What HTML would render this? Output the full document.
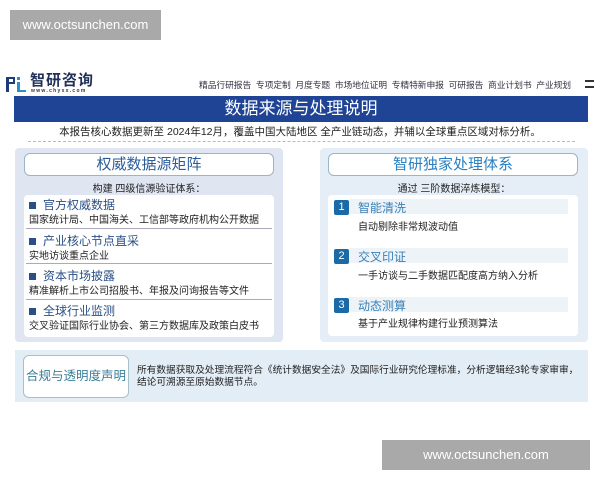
<!DOCTYPE html>
<html><head><meta charset="utf-8"><style>
*{margin:0;padding:0;box-sizing:border-box}
body{width:600px;height:480px;background:#fff;position:relative;overflow:hidden;font-family:"Liberation Sans","Noto Sans CJK SC",sans-serif;color:#222}
.a{position:absolute}
.badge{background:#a9a9a9;color:#fff;font-size:13px;line-height:30px;text-align:center}
.nav{font-size:8.8px;color:#334;white-space:nowrap;letter-spacing:-0.1px}
.panel{border-radius:4px}
.hdr{background:#fff;border:1px solid #9fb3c8;border-radius:6px;text-align:center;font-size:15px;line-height:22px}
.sub{font-size:10px;text-align:center;width:100%}
.h{font-size:12px;color:#2b4f85;white-space:nowrap}
.d{font-size:10px;color:#222;white-space:nowrap}
.ln{height:1px;background:#aab}
.num{background:#1b6aa5;color:#fff;font-size:11px;text-align:center;line-height:15px;width:15px;height:15px;border-radius:2px}
.band{background:#eef3f8;height:15px}
.h2{font-size:12px;color:#3a80b5;white-space:nowrap}
</style></head><body>
<div class="a badge" style="left:10px;top:10px;width:151px;height:30px">www.octsunchen.com</div>
<div class="a badge" style="left:382px;top:440px;width:208px;height:30px">www.octsunchen.com</div>

<svg class="a" style="left:5px;top:76px" width="22" height="17" viewBox="0 0 22 17">
<path d="M1 1h9v7H4v8H1z" fill="#1f3a78"/><path d="M12 1h3v3h-3z" fill="#2a8fd0"/><path d="M12 6h3v8h6v2h-9z" fill="#2a8fd0"/><path d="M4 3h4v3H4z" fill="#fff"/></svg>
<div class="a" style="left:30px;top:73px;font-size:15px;line-height:15px;font-weight:bold;color:#1f2f55;letter-spacing:1px">智研咨询</div>
<div class="a" style="left:31px;top:89px;font-size:5px;line-height:5px;color:#333;letter-spacing:1.3px;font-weight:bold">www.chyxx.com</div>
<div class="a nav" style="left:199px;top:78px">精品行研报告 &nbsp;专项定制 &nbsp;月度专题 &nbsp;市场地位证明 &nbsp;专精特新申报 &nbsp;可研报告 &nbsp;商业计划书 &nbsp;产业规划</div>
<div class="a" style="left:585px;top:80px;width:9px;height:8px;border-top:2px solid #333;border-bottom:2px solid #333"></div>

<div class="a" style="left:14px;top:96px;width:574px;height:26px;background:#1f4496;color:#fff;font-size:17px;text-align:center;line-height:26px">数据来源与处理说明</div>
<div class="a" style="left:0;top:124px;width:600px;text-align:center;font-size:10.5px">本报告核心数据更新至 2024年12月，覆盖中国大陆地区 全产业链动态，并辅以全球重点区域对标分析。</div>
<div class="a" style="left:28px;top:141px;width:547px;border-top:1px dashed #bbb"></div>

<div class="a panel" style="left:15px;top:148px;width:268px;height:194px;background:#dfe5f1"></div>
<div class="a hdr" style="left:24px;top:153px;width:250px;height:23px;color:#2b5c9a">权威数据源矩阵</div>
<div class="a sub" style="left:15px;top:180px;width:268px">构建 四级信源验证体系：</div>
<div class="a" style="left:24px;top:195px;width:250px;height:142px;background:#fff;border-radius:4px"></div>
<div class="a h" style="left:29px;top:196px"><span style="display:inline-block;width:7px;height:7px;background:#2b4f85;margin-right:7px"></span>官方权威数据</div>
<div class="a d" style="left:29px;top:211px">国家统计局、中国海关、工信部等政府机构公开数据</div>
<div class="a ln" style="left:26px;top:228px;width:246px"></div>
<div class="a h" style="left:29px;top:232px"><span style="display:inline-block;width:7px;height:7px;background:#2b4f85;margin-right:7px"></span>产业核心节点直采</div>
<div class="a d" style="left:29px;top:247px">实地访谈重点企业</div>
<div class="a ln" style="left:26px;top:263px;width:246px"></div>
<div class="a h" style="left:29px;top:267px"><span style="display:inline-block;width:7px;height:7px;background:#2b4f85;margin-right:7px"></span>资本市场披露</div>
<div class="a d" style="left:29px;top:282px">精准解析上市公司招股书、年报及问询报告等文件</div>
<div class="a ln" style="left:26px;top:299px;width:246px"></div>
<div class="a h" style="left:29px;top:302px"><span style="display:inline-block;width:7px;height:7px;background:#2b4f85;margin-right:7px"></span>全球行业监测</div>
<div class="a d" style="left:29px;top:317px">交叉验证国际行业协会、第三方数据库及政策白皮书</div>

<div class="a panel" style="left:320px;top:148px;width:268px;height:194px;background:#e5eef7"></div>
<div class="a hdr" style="left:328px;top:153px;width:250px;height:23px;color:#2b7fc0">智研独家处理体系</div>
<div class="a sub" style="left:320px;top:180px;width:268px">通过 三阶数据淬炼模型：</div>
<div class="a" style="left:328px;top:195px;width:250px;height:141px;background:#fff;border-radius:4px"></div>
<div class="a band" style="left:349px;top:199px;width:219px"></div>
<div class="a num" style="left:334px;top:200px">1</div>
<div class="a h2" style="left:358px;top:199px">智能清洗</div>
<div class="a d" style="left:358px;top:218px">自动剔除非常规波动值</div>
<div class="a band" style="left:349px;top:248px;width:219px"></div>
<div class="a num" style="left:334px;top:249px">2</div>
<div class="a h2" style="left:358px;top:248px">交叉印证</div>
<div class="a d" style="left:358px;top:267px">一手访谈与二手数据匹配度高方纳入分析</div>
<div class="a band" style="left:349px;top:297px;width:219px"></div>
<div class="a num" style="left:334px;top:298px">3</div>
<div class="a h2" style="left:358px;top:297px">动态测算</div>
<div class="a d" style="left:358px;top:315px">基于产业规律构建行业预测算法</div>

<div class="a" style="left:15px;top:350px;width:573px;height:52px;background:#e3edf5"></div>
<div class="a" style="left:23px;top:355px;width:106px;height:43px;background:#fff;border:1px solid #a8c0cc;border-radius:6px;color:#3b7d96;font-size:12.5px;text-align:center;line-height:41px;white-space:nowrap">合规与透明度声明</div>
<div class="a" style="left:137px;top:365px;width:445px;font-size:9.7px;line-height:12px">所有数据获取及处理流程符合《统计数据安全法》及国际行业研究伦理标准，分析逻辑经3轮专家审审，结论可溯源至原始数据节点。</div>
</body></html>
